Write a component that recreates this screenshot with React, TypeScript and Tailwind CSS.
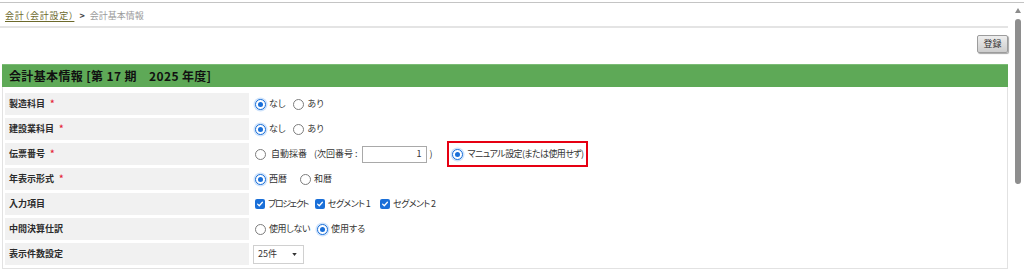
import React from 'react';
import clsx from 'clsx';

const FONT = "font-['Meiryo_UI','Noto_Sans_CJK_JP',sans-serif]";
const PALT = "[font-feature-settings:'palt']";

const Radio = ({ checked }: { checked?: boolean }) => (
  <span
    className={clsx(
      'inline-flex w-[11px] h-[11px] shrink-0 rounded-full border items-center justify-center bg-white',
      checked ? 'border-[#1a6fd8] ring-[1.5px] ring-[#cfe3fb]' : 'border-[#7d7d7d]'
    )}
  >
    {checked && <span className="w-[5px] h-[5px] rounded-full bg-[#1a6fd8]" />}
  </span>
);

const Check = () => (
  <span className="inline-flex w-[10px] h-[10px] shrink-0 rounded-[2px] bg-[#1a6fd8] items-center justify-center">
    <svg viewBox="0 0 10 10" className="w-[8px] h-[8px]">
      <path d="M2 5.2 L4.1 7.2 L8 2.8" fill="none" stroke="#fff" strokeWidth="1.6" strokeLinecap="round" strokeLinejoin="round" />
    </svg>
  </span>
);

const Opt = ({ checked, label, className, textClass }: { checked?: boolean; label: string; className?: string; textClass?: string }) => (
  <span className={clsx('inline-flex items-center gap-[3px]', className)}>
    <Radio checked={checked} />
    <span className={clsx('whitespace-nowrap', textClass)}>{label}</span>
  </span>
);

const CheckOpt = ({ label, className, textClass }: { label: string; className?: string; textClass?: string }) => (
  <span className={clsx('inline-flex items-center gap-[3px]', className)}>
    <Check />
    <span className={clsx('whitespace-nowrap', textClass)}>{label}</span>
  </span>
);

const Row = ({ label, required, children, valueClass }: { label: string; required?: boolean; children: React.ReactNode; valueClass?: string }) => (
  <div className="flex h-[22px]">
    <div className="w-[244px] shrink-0 bg-[#f1f1f1] flex items-center pl-[4px] font-bold text-[#2b2b2b]">
      {label}
      {required && <span className="ml-[5px] text-[#e5243b] font-bold">*</span>}
    </div>
    <div className={clsx('flex-1 flex items-center text-[#333]', valueClass ?? 'pl-[6px]')}>{children}</div>
  </div>
);

export default function App() {
  return (
    <div className={clsx('w-[1024px] h-[274px] overflow-hidden bg-white pt-[2px]', FONT, PALT)}>
      <div className="border-t border-[#c4c4c4] flex">
        {/* main */}
        <div className="w-[1008px] shrink-0">
          {/* breadcrumb */}
          <div className="h-[25px] flex items-center pl-[5px] pt-[2px] text-[9px] border-b-2 border-[#e4e4e4]">
            <span className="text-[#6d6a2c] underline underline-offset-2 tracking-[0.8px]">会計（会計設定）</span>
            <span className="ml-[5px] text-[#444] font-bold">&gt;</span>
            <span className="ml-[5px] text-[#9a9a9a]">会計基本情報</span>
          </div>

          {/* toolbar */}
          <div className="flex justify-end pt-[7px] h-[36px]">
            <button className="w-[31px] h-[18px] text-[9px] text-[#333] border border-[#9c9c9c] rounded-[2px] bg-gradient-to-b from-[#eeeeee] to-[#cdcdcd] shadow-[1px_1px_1px_rgba(0,0,0,0.35)]">
              登録
            </button>
          </div>

          {/* header */}
          <div className="ml-[2px] h-[23px] bg-[#5ea957] border-t border-[#7cbc76] flex items-center pl-[7px] text-[12px] font-bold text-[#111] [font-feature-settings:normal] tracking-[0.35px]">
            会計基本情報 [第 17 期　2025 年度]
          </div>

          {/* body */}
          <div className="ml-[2px] border-x border-b border-[#e2e2e2] pt-[6px] pl-[2px] flex flex-col gap-[3px] text-[9px]">
            <Row label="製造科目" required>
              <Opt checked label="なし" />
              <Opt label="あり" className="ml-[8px]" />
            </Row>
            <Row label="建設業科目" required>
              <Opt checked label="なし" />
              <Opt label="あり" className="ml-[8px]" />
            </Row>
            <Row label="伝票番号" required>
              <Radio />
              <span className="ml-[5px] whitespace-nowrap">自動採番</span>
              <span className="ml-[7px] whitespace-nowrap">(次回番号 :</span>
              <span className="ml-[4px] w-[65px] h-[17px] border border-[#a9a9a9] flex items-center justify-end pr-[4px] bg-white shrink-0">1</span>
              <span className="ml-[3px]">)</span>
              <span className="ml-[14px] h-[26px] w-[141px] border-2 border-[#e60012] flex items-center pl-[3px] gap-[5px] shrink-0">
                <Radio checked />
                <span className="whitespace-nowrap tracking-[-0.6px]">マニュアル設定(または使用せず)</span>
              </span>
            </Row>
            <Row label="年表示形式" required>
              <Opt checked label="西暦" />
              <Opt label="和暦" className="ml-[13px]" />
            </Row>
            <Row label="入力項目">
              <CheckOpt label="プロジェクト" textClass="tracking-[-1.4px]" />
              <CheckOpt label="セグメント 1" className="ml-[7px]" textClass="tracking-[-0.6px]" />
              <CheckOpt label="セグメント 2" className="ml-[10px]" textClass="tracking-[-0.6px]" />
            </Row>
            <Row label="中間決算仕訳">
              <Opt label="使用しない" textClass="tracking-[-0.4px]" />
              <Opt checked label="使用する" className="ml-[7px]" />
            </Row>
            <Row label="表示件数設定" valueClass="pl-[4px]">
              <span className="w-[51px] h-[19px] border border-[#d0d0d0] flex items-center pl-[4px] pr-[6px] justify-between bg-white">
                <span>25件</span>
                <svg viewBox="0 0 6 4" className="w-[5px] h-[3px]">
                  <path d="M0 0 L6 0 L3 4 Z" fill="#333" />
                </svg>
              </span>
            </Row>
            <div className="h-0" />
          </div>
        </div>

        {/* scrollbar */}
        <div className="flex-1 flex flex-col items-center pt-[5px] pl-[3px]">
          <svg viewBox="0 0 6 5" className="w-[6px] h-[5px]">
            <path d="M0 5 L3 0 L6 5 Z" fill="#8c8c8c" />
          </svg>
          <div className="mt-[6px] w-[6px] h-[165px] rounded-full bg-[#8e8e8e]" />
        </div>
      </div>
    </div>
  );
}
